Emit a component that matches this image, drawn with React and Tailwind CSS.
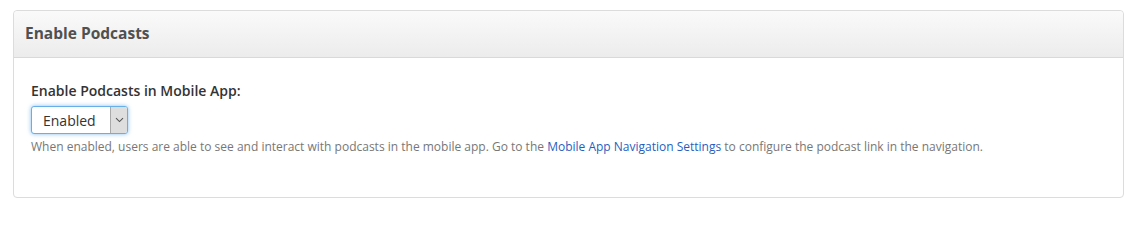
import React from 'react';

const App = () => {
  return (
    <div className="bg-white h-[216px] pt-[10px] pl-[13px] pr-[9px] font-['Open_Sans',sans-serif]">
      <div className="border border-[#dcdcdc] rounded-[4px] bg-white h-[188px]">
        <div className="h-[47px] flex items-center px-[11px] border-b border-[#d9d9d9] rounded-t-[4px] bg-gradient-to-b from-[#fafafa] to-[#ececec]">
          <h2 className="text-[15.5px] font-bold text-[#505050]">Enable Podcasts</h2>
        </div>

        <div className="pt-[23px] px-[17px]">
          <label className="block text-[14px] font-semibold text-[#333] leading-[20px]">
            Enable Podcasts in Mobile App:
          </label>

          <div className="mt-[5px] flex w-[97px] h-[28px] rounded-[3px] border border-[#66afe9] shadow-[0_0_4px_rgba(102,175,233,0.8)] bg-white overflow-hidden">
            <span className="flex-1 flex items-center pl-[11px] text-[14px] text-[#333]">Enabled</span>
            <span className="w-[17px] flex items-center justify-center bg-[#dedede] border-l border-[#a9a9a9]">
              <svg width="9" height="6" viewBox="0 0 9 6" fill="none">
                <path d="M1 1.2 L4.5 4.6 L8 1.2" stroke="#555" strokeWidth="1.1" />
              </svg>
            </span>
          </div>

          <p className="mt-[4px] text-[12px] leading-[17px] text-[#777]">
            When enabled, users are able to see and interact with podcasts in the mobile app. Go to the{' '}
            <a href="#" className="text-[#1f5fbf]">Mobile App Navigation Settings</a> to configure the podcast link in the navigation.
          </p>
        </div>
      </div>
    </div>
  );
};

export default App;
